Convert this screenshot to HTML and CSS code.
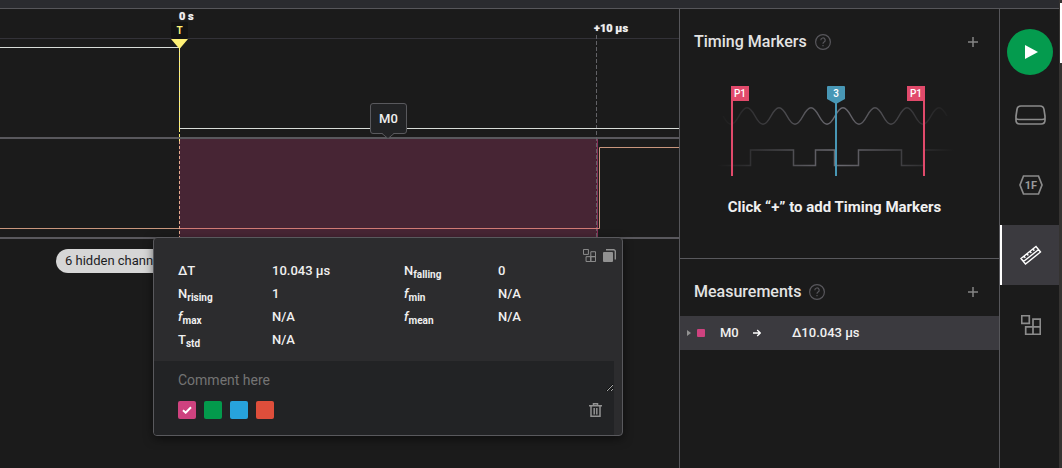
FILE: index.html
```html
<!DOCTYPE html>
<html lang="en">
<head>
<meta charset="utf-8">
<title>Logic Analyzer</title>
<link rel="stylesheet" href="styles.css">
</head>
<body>
<svg class="defs" aria-hidden="true">
  <symbol id="blocks" viewBox="0 0 20 20">
    <path d="M.7.7h7.600v7.600H.7zM12 4.200h7.300v7.600H12zM4.700 11.800H12v7.500H4.700zM12 11.800h7.300v7.500H12z"/>
  </symbol>
  <symbol id="help" viewBox="0 0 16 16">
    <circle cx="8" cy="8" r="7.400"/>
    <path d="M5.800 6.200a2.200 2.200 0 1 1 3.300 1.900C8.300 8.600 8 9 8 9.800M8 11v1.300"/>
  </symbol>
  <symbol id="plus" viewBox="0 0 10 10"><path d="M5 0v10M0 5h10"/></symbol>
</svg>
<div class="app">
  <div class="window">
    <header class="topbar"></header>
    <main class="workspace">
      <section class="plot" aria-label="Waveforms">
        <div class="ruler"></div>
        <div class="channel"></div>
        <div class="channel"></div>
        <button class="hidden-channels">6 hidden channels</button>
        <svg class="traces" aria-hidden="true">
          <rect x="179" y="130" width="419" height="98" fill="#472534"/>
          <path d="M597.500 130v98" stroke="#8a3058"/>
          <path d="M596.500 26v202" stroke="#626266" stroke-dasharray="4 2"/>
          <path d="M0 219.500h599.500v-81H4000" stroke="#c9967d"/>
          <path d="M179 219.500h420" stroke="#d07a74"/>
          <path d="M0 38.500h179.500v81H4000" stroke="#d8dcd8"/>
          <path d="M179.500 38v82" stroke="#fff176" stroke-dasharray="4 1"/>
          <path d="M179.500 120v12" stroke="#fff176" stroke-dasharray="3 2"/>
          <path d="M179.500 132v96" stroke="#e5ab8c" stroke-dasharray="3 2"/>
          <path d="M171 30h17l-8.500 10z" fill="#fff176"/>
        </svg>
        <span class="tick tick-zero">0 s</span>
        <span class="trigger">T</span>
        <span class="tick tick-ten">+10 µs</span>
        <div class="tag">M0
          <svg class="tag-arrow" viewBox="0 0 12 6" aria-hidden="true"><path class="tag-fill" d="M0 0h12L6 5.500z"/><path d="M0 .5 6 5.500 12 .5"/></svg>
        </div>
        <div class="popup">
          <div class="popup-tools">
            <button aria-label="Extensions"><svg class="mini" aria-hidden="true"><use href="#blocks"/></svg></button>
            <button aria-label="Copy"><svg class="copy" viewBox="0 0 13 13" aria-hidden="true"><rect x="0" y="3" width="10" height="10" rx="1"/><path d="M3 .7h7.500a1.800 1.800 0 0 1 1.800 1.800V10.500"/></svg></button>
          </div>
          <dl class="metrics">
            <dt>ΔT</dt><dd>10.043 µs</dd><dt>N<sub>falling</sub></dt><dd>0</dd>
            <dt>N<sub>rising</sub></dt><dd>1</dd><dt><i>f</i><sub>min</sub></dt><dd>N/A</dd>
            <dt><i>f</i><sub>max</sub></dt><dd>N/A</dd><dt><i>f</i><sub>mean</sub></dt><dd>N/A</dd>
            <dt>T<sub>std</sub></dt><dd>N/A</dd>
          </dl>
          <div class="notes">
            <textarea class="comment" rows="1" aria-label="Comment" placeholder="Comment here"></textarea>
            <div class="swatches">
              <button class="swatch pink" aria-label="Pink, selected"><svg viewBox="0 0 10 8" aria-hidden="true"><path d="M1 4.200 3.700 6.700 9 1.200"/></svg></button>
              <button class="swatch green" aria-label="Green"></button>
              <button class="swatch blue" aria-label="Blue"></button>
              <button class="swatch red" aria-label="Red"></button>
              <button class="delete" aria-label="Delete"><svg viewBox="0 0 13 14" aria-hidden="true"><path d="M0 2.700h13M4.500 2.500V.7h4v1.800M2 3v10.300h9V3M5.200 5v6.500M7.800 5v6.500"/></svg></button>
            </div>
          </div>
        </div>
      </section>

      <aside class="panel">
        <section class="markers">
          <div class="heading">
            <h2>Timing Markers</h2>
            <button class="help" aria-label="About timing markers"><svg aria-hidden="true"><use href="#help"/></svg></button>
            <button class="add" aria-label="Add timing marker"><svg aria-hidden="true"><use href="#plus"/></svg></button>
          </div>
          <svg class="illustration" viewBox="0 0 248 91" aria-hidden="true">
            <defs>
              <linearGradient id="fade" gradientUnits="userSpaceOnUse" x1="8" y1="0" x2="244" y2="0">
                <stop offset="0" stop-color="#6c6b72" stop-opacity="0"/>
                <stop offset=".5" stop-color="#6c6b72"/>
                <stop offset="1" stop-color="#6c6b72" stop-opacity="0"/>
              </linearGradient>
            </defs>
            <g fill="none" stroke="url(#fade)" stroke-width="1.500">
              <path d="M13 31c6 11 10 11 16 0s10-11 16 0s10 11 16 0s10-11 16 0s10 11 16 0s10-11 16 0s10 11 16 0s10-11 16 0s10 11 16 0s10-11 16 0s10 11 16 0s10-11 16 0s10 11 16 0s10-11 16 0"/>
              <path d="M8 80.500h32.500V65h43v15.500h22V65h19v15.500h24V65h43v15.500h22V65H244"/>
            </g>
            <path d="M22 1v90M214 1v90" stroke="#e14a6b" stroke-width="2"/>
            <path d="M21 1h18v15H21zM197 1h18v15h-18z" fill="#e14a6b"/>
            <path d="M118 1h16a1 1 0 0 1 1 1v12l-9 5-9-5V2a1 1 0 0 1 1-1z" fill="#4897b5"/>
            <path d="M126 18v73" stroke="#4897b5" stroke-width="2"/>
            <g class="flag-text"><text x="30" y="12">P1</text><text x="126" y="12">3</text><text x="206" y="12">P1</text></g>
          </svg>
          <p class="hint">Click “+” to add Timing Markers</p>
        </section>
        <section class="measurements">
          <div class="heading">
            <h2>Measurements</h2>
            <button class="help" aria-label="About measurements"><svg aria-hidden="true"><use href="#help"/></svg></button>
            <button class="add" aria-label="Add measurement"><svg aria-hidden="true"><use href="#plus"/></svg></button>
          </div>
          <div class="row">
            <button class="expand" aria-label="Expand M0"><svg viewBox="0 0 4 6" aria-hidden="true"><path d="M0 0l4 3-4 3z"/></svg></button>
            <span class="dot"></span>
            <span class="name">M0</span>
            <svg class="goto" viewBox="0 0 8 8" aria-hidden="true"><path d="M0 4h7M4.200 1 7.300 4 4.200 7"/></svg>
            <span>Δ10.043 µs</span>
          </div>
        </section>
      </aside>

      <nav class="rail" aria-label="Tools">
        <button class="play" aria-label="Start capture"><svg viewBox="0 0 13 14" aria-hidden="true"><path d="M0 0l13 7-13 7z"/></svg></button>
        <button class="tool" aria-label="Device"><svg width="31" height="20" viewBox="0 0 31 20" aria-hidden="true"><path d="M6 1h19q3.500 0 4 3.500l1 6.500v4q0 4-4 4H5q-4 0-4-4v-4l1-6.500Q2.500 1 6 1zM1 13.500q1 1 3 1h23q2 0 3-1"/></svg></button>
        <button class="tool" aria-label="Analyzers"><svg width="24" height="20" viewBox="0 0 24 20" aria-hidden="true"><path d="M4.500 1h15l3.500 9-3.500 9h-15L1 10z"/><text x="12" y="14">1F</text></svg></button>
        <button class="tool active" aria-label="Timing markers and measurements"><svg width="22" height="20" viewBox="0 0 22 20" aria-hidden="true"><path d="M1 13.500 16 1.500l4.500 5.500L5.500 19zM3.500 16.500 18.700 4.500M4 11.200l1.300 1.700M7 8.800l1.300 1.700M10 6.400l1.300 1.700M13 4l1.300 1.700"/></svg></button>
        <button class="tool" aria-label="Extensions"><svg width="20" height="20" aria-hidden="true"><use href="#blocks"/></svg></button>
      </nav>
    </main>
  </div>
  <div class="edge"><span class="thumb"></span></div>
</div>
</body>
</html>
```

FILE: styles.css
```css
* { box-sizing: border-box; }
body {
  margin: 0;
  background: #1b1b1b;
  color: #f0f0f0;
  font: 500 13px/16px Roboto, "Liberation Sans", sans-serif;
}
button {
  display: flex;
  align-items: center;
  justify-content: center;
  padding: 0;
  border: 0;
  background: none;
  color: inherit;
  font: inherit;
}
svg { display: block; fill: none; stroke: none; }
h2, p, dl, dd { margin: 0; }
.defs { position: absolute; width: 0; height: 0; }

.app { display: flex; min-height: 100vh; }
.window { flex: 1; display: flex; flex-direction: column; min-width: 0; }
.topbar { height: 9px; background: #2a2b2f; border-bottom: 1px solid #56565a; }
.workspace { flex: 1; display: flex; }
.edge { width: 3px; padding-top: 3px; background: #353331; }
.thumb { display: block; width: 2px; height: 60px; margin-left: 1px; background: #fff; }

/* Waveform canvas */
.plot { position: relative; flex: 1; min-width: 0; overflow: hidden; }
.ruler { height: 30px; border-bottom: 1px solid #333238; }
.channel { height: 100px; border-bottom: 2px solid #59585d; }
.traces { position: absolute; inset: 0; width: 100%; height: 100%; }
.tick, .trigger { position: absolute; font-size: 11px; line-height: 14px; }
.tick { font-weight: 900; text-shadow: 0 0 1px #8a8a8a; }
.tick-zero { left: 179px; top: 1px; }
.tick-ten { left: 594px; top: 13px; }
.trigger {
  left: 171px;
  top: 13px;
  width: 17px;
  height: 17px;
  line-height: 17px;
  border-radius: 2px;
  background: #141414;
  color: #fff176;
  font-size: 10px;
  font-weight: 700;
  text-align: center;
}
.hidden-channels {
  height: 24px;
  margin: 10px 0 0 56px;
  padding: 0 9px;
  border-radius: 12px;
  background: #d6d6d6;
  color: #1c1c1e;
  font-weight: 400;
}
.tag {
  position: absolute;
  left: 370px;
  top: 94px;
  width: 37px;
  padding: 7px 0 6px;
  border: 1px solid #59595d;
  border-radius: 3px;
  background: #222325;
  text-align: center;
  line-height: 16px;
}
.tag-arrow { position: absolute; left: 11px; top: 29px; width: 12px; height: 6px; stroke: #59595d; }
.tag-fill { fill: #222325; stroke: none; }

/* Measurement popup */
.popup {
  position: absolute;
  left: 153px;
  top: 228px;
  width: 470px;
  overflow: hidden;
  border: 1px solid #59595d;
  border-radius: 4px;
  background: #2c2c2e;
  box-shadow: 0 3px 10px rgba(0, 0, 0, .5);
}
.popup-tools {
  display: flex;
  justify-content: flex-end;
  gap: 7px;
  padding: 11px 6px 0;
}
.mini { width: 13px; height: 13px; stroke: #909090; stroke-width: 1.5; }
.copy { width: 13px; height: 13px; fill: #919191; }
.copy path { fill: none; stroke: #919191; stroke-width: 1.4; }
.metrics {
  display: grid;
  grid-template-columns: 94px 132px 94px 1fr;
  grid-auto-rows: 23px;
  padding: 0 24px 7px;
}
.metrics dt, .metrics dd { line-height: 18px; }
.metrics sub { font-size: 10px; font-weight: 700; line-height: 0; vertical-align: -3px; }
.notes {
  margin-right: 8px;
  padding: 9px 12px 16px 24px;
  background: #222325;
}
.comment {
  display: block;
  width: calc(100% + 12px);
  height: 22px;
  padding: 0;
  border: 0;
  outline: 0;
  background: none;
  color: #f0f0f0;
  resize: vertical;
  font: 400 14px/20px Roboto, "Liberation Sans", sans-serif;
}
.comment::placeholder { color: #747474; }
.swatches { display: flex; align-items: center; gap: 8px; padding-top: 9px; }
.swatch { width: 18px; height: 18px; border-radius: 2px; }
.swatch svg { width: 10px; height: 8px; stroke: #fff; stroke-width: 2; }
.pink { background: #ce427f; }
.green { background: #039a4c; }
.blue { background: #27a3dc; }
.red { background: #de4e3b; }
.delete { margin-left: auto; }
.delete svg { width: 13px; height: 14px; stroke: #929292; stroke-width: 1.5; }

/* Side panel */
.panel { width: 320px; flex: none; border-left: 1px solid #56565a; }
.heading { display: flex; align-items: center; padding: 0 20px 0 14px; height: 65px; }
.heading h2 { font-size: 16px; line-height: 20px; font-weight: 500; color: #e3e3e3; }
.help { margin-left: 8px; }
.help svg { width: 16px; height: 16px; stroke: #58575c; stroke-width: 1.2; }
.add { margin-left: auto; }
.add svg { width: 12px; height: 10px; stroke: #858585; stroke-width: 1.5; }
.markers { border-bottom: 1px solid #59595d; padding-bottom: 41px; }
.illustration { width: 248px; height: 91px; margin: 11px auto 0 30px; }
.flag-text { fill: #fff; font-size: 10px; text-anchor: middle; }
.hint { margin-top: 21px; padding: 0 24px 0 14px; font-size: 15px; line-height: 20px; text-align: center; font-weight: 700; }
.measurements .heading { height: 57px; padding-top: 8px; }
.row {
  display: flex;
  align-items: center;
  height: 34px;
  padding-left: 7px;
  background: #3b3a3f;
}
.expand svg { width: 4px; height: 6px; fill: #929292; }
.dot { width: 8px; height: 8px; margin: 0 15px 0 6px; border-radius: 1px; background: #ce427f; }
.name { width: 33px; }
.goto { width: 8px; height: 8px; margin-right: 31px; stroke: #fff; stroke-width: 1.3; }

/* Tool rail */
.rail {
  display: flex;
  flex-direction: column;
  align-items: stretch;
  width: 60px;
  flex: none;
  border-left: 1px solid #56565a;
}
.play { width: 46px; height: 46px; margin: 20px 0 10px 7px; border-radius: 50%; background: #049b4e; flex: none; }
.play svg { width: 13px; height: 14px; margin-left: 3px; fill: #fff; }
.tool { height: 60px; margin-bottom: 10px; border-left: 2px solid transparent; }
.tool svg { stroke: #8b8b8b; stroke-width: 1.7; }
.tool text { fill: #9a9a9a; stroke: none; font-size: 11px; font-weight: 700; text-anchor: middle; }
.tool.active { border-color: #fff; background: #3b3a3f; }
.tool.active svg { stroke: #fff; stroke-width: 1.4; }
```
